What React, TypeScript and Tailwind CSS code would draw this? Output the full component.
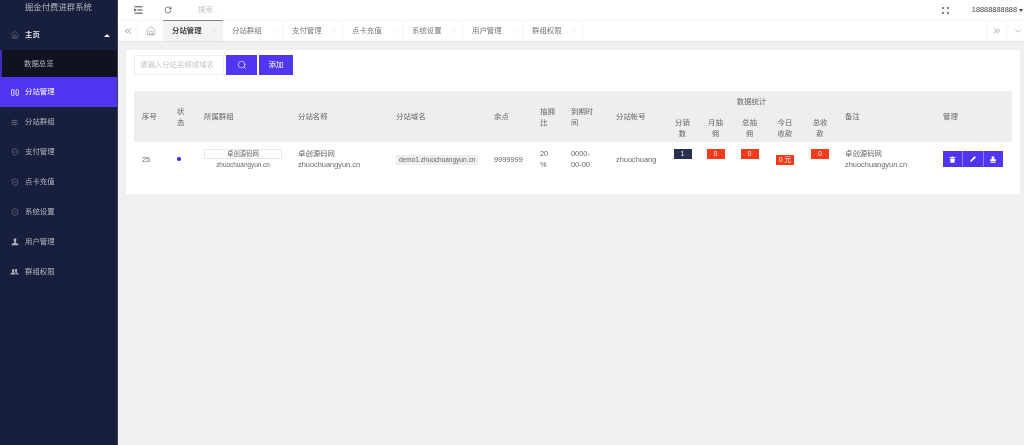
import React from "react";
import { RotateCw, ChevronsLeft, ChevronsRight, ChevronDown, Home, X, Search, ShieldCheck, Pencil, SlidersHorizontal } from "lucide-react";

const font = { fontFamily: '"Liberation Sans","Noto Sans CJK SC",sans-serif' };

function NavRow({ label, icon, active }: { label: string; icon: React.ReactNode; active?: boolean }) {
  return (
    <div className={`h-[30px] flex items-center pl-[10px] gap-[6px] text-[7.4px] ${active ? "bg-[#4f36f0] text-white" : "text-[#b4b7c1]"}`}>
      <span className="w-[9px] flex justify-center">{icon}</span>
      <span>{label}</span>
    </div>
  );
}

function TwoBars() {
  return (
    <svg width="8" height="7" viewBox="0 0 8 7" fill="none" stroke="currentColor" strokeWidth="0.8">
      <rect x="0.5" y="0.5" width="2.4" height="6" rx="0.8" />
      <rect x="5" y="0.5" width="2.4" height="6" rx="0.8" />
    </svg>
  );
}
function PersonIcon() {
  return (
    <svg width="8" height="8" viewBox="0 0 8 8" fill="currentColor">
      <path d="M2.6 1.8a1.4 1.4 0 0 1 2.8 0c0 1-.5 1.7-.7 2.3v.6L7.4 6v1.2H.6V6l2.7-1.3v-.6c-.2-.6-.7-1.3-.7-2.3z" />
    </svg>
  );
}
function PeopleIcon() {
  return (
    <svg width="10" height="8" viewBox="0 0 10 8" fill="currentColor">
      <path d="M2.2 2a1.3 1.3 0 0 1 2.6 0c0 .9-.4 1.5-.6 2v.6l2 1.1v1.1H.6V5.700l2-1.100V4c-.2-.5-.4-1.100-.4-2z" />
      <path d="M6 .8a1.300 1.300 0 0 1 2 1.200c0 .9-.4 1.500-.6 2v.6l2 1v1.200H7.200V5.300L5.400 4.200c.2-.6.4-1.200.4-2 0-.5 0-1 .2-1.400z" />
    </svg>
  );
}
function IndentMenu() {
  return (
    <svg width="9" height="8" viewBox="0 0 9 8" fill="none" stroke="currentColor" strokeWidth="0.9">
      <path d="M0.500 0.800H8.500M3.500 4H8.500M0.500 7.200H8.500" />
      <path d="M0.500 2.700 2.300 4 0.500 5.300z" fill="currentColor" strokeWidth="0.3" />
    </svg>
  );
}
function CornersIcon() {
  return (
    <svg width="7" height="7" viewBox="0 0 7 7" fill="none" stroke="#666" strokeWidth="0.8">
      <path d="M0.500 2.200V0.500H2.200M0.500 0.500 2.300 2.300M6.500 2.200V0.500H4.800M6.500 0.500 4.700 2.300M0.500 4.800V6.500H2.200M0.500 6.500 2.300 4.700M6.500 4.800V6.500H4.800M6.500 6.500 4.700 4.700" />
    </svg>
  );
}
function TrashFilled() {
  return (
    <svg width="7" height="7" viewBox="0 0 7 7" fill="white">
      <path d="M0.500 1.300H2.300L2.700 .5H4.300L4.700 1.300H6.500V2.100H.5zM1.100 2.600H5.900L5.500 6.700H1.500z" />
    </svg>
  );
}
function StampFilled() {
  return (
    <svg width="8" height="7" viewBox="0 0 8 7" fill="white">
      <path d="M2.500 1.500a1.500 1.200 0 0 1 3 0c0 .8-.5 1.200-.6 1.800H7V5H1V3.300h2.100c-.1-.6-.6-1-.6-1.800zM1.500 5.500H6.500V6.700H1.500z" />
    </svg>
  );
}

const tabs = ["分站群组", "支付管理", "点卡充值", "系统设置", "用户管理", "群组权限"];
const th = "font-normal px-[8px] text-left align-middle leading-[11px]";
const subTh = "font-normal px-[8px] text-center align-top leading-[11px] pt-[4px]";

function Badge({ children, dark }: { children: React.ReactNode; dark?: boolean }) {
  return <span className={`inline-block w-[18px] h-[10px] leading-[10px] text-center text-[6.5px] text-white ${dark ? "bg-[#26324d]" : "bg-[#fb3a1c]"}`}>{children}</span>;
}

export default function App() {
  return (
    <div className="flex h-[445px] w-[1024px] overflow-hidden bg-[#f0f0f0] text-[#666] blur-[0.25px]" style={font}>
      <aside className="w-[118px] shrink-0 bg-[#171f3c] border-r border-[#3b4256] flex flex-col">
        <div className="h-[20px] flex items-start pt-[2px] pl-[25px] text-[8.4px] leading-[10px] text-[#b4b7c1]">掘金付费进群系统</div>
        <div className="h-[30px] flex items-center pl-[10px] gap-[6px] text-[7.4px] text-[#e4e5ea]">
          <span className="w-[9px] flex justify-center"><Home size={8} strokeWidth={1} className="text-[#b4b7c1]" /></span>
          <span className="font-bold">主页</span>
          <span className="ml-auto mr-[7px] w-0 h-0 border-x-[3.5px] border-x-transparent border-b-[3.5px] border-b-white" />
        </div>
        <div className="h-[27px] bg-[#10131f] border-l-[2.5px] border-[#3e2dc0] flex items-center pl-[22px] text-[7.4px] text-[#b4b7c1]">数据总览</div>
        <NavRow active label="分站管理" icon={<TwoBars />} />
        <NavRow label="分站群组" icon={<SlidersHorizontal size={7} strokeWidth={1.3} />} />
        <NavRow label="支付管理" icon={<ShieldCheck size={8} strokeWidth={1.1} />} />
        <NavRow label="点卡充值" icon={<ShieldCheck size={8} strokeWidth={1.1} />} />
        <NavRow label="系统设置" icon={<ShieldCheck size={8} strokeWidth={1.1} />} />
        <NavRow label="用户管理" icon={<PersonIcon />} />
        <NavRow label="群组权限" icon={<PeopleIcon />} />
      </aside>

      <main className="flex-1 min-w-0 flex flex-col">
        <header className="h-[20px] bg-white flex items-center text-[#333]">
          <span className="ml-[16px] flex"><IndentMenu /></span>
          <RotateCw size={8} strokeWidth={1.8} className="ml-[21px]" />
          <span className="ml-[26px] text-[7.4px] text-[#c4c4c4]">搜索...</span>
          <span className="ml-auto flex"><CornersIcon /></span>
          <span className="ml-[23px] text-[7.4px] text-[#444]">18888888888</span>
          <span className="ml-[2px] mr-[1px] w-0 h-0 border-x-[2.5px] border-x-transparent border-t-[3px] border-t-[#444]" />
        </header>

        <nav className="h-[22px] bg-white border-y border-b-[#e2e2e2] border-t-[#f6f6f6] flex items-stretch text-[7.4px] text-[#777]">
          <div className="w-[20px] flex items-center justify-center border-r border-[#f2f2f2]"><ChevronsLeft size={10} strokeWidth={1.3} className="text-[#444]" /></div>
          <div className="w-[25px] flex items-center justify-center"><Home size={10} strokeWidth={1} className="text-[#555]" /></div>
          <div className="w-[60px] bg-[#f3f3f3] border-t border-[#7b8191] -mt-px flex items-center pl-[9px] text-[#444] font-bold">
            <span>分站管理</span><X size={5} strokeWidth={1} className="ml-[10px] text-[#bbb]" />
          </div>
          {tabs.map((t) => (
            <div key={t} className="w-[60px] flex items-center pl-[9px] border-r border-[#f4f4f4]">
              <span>{t}</span><X size={5} strokeWidth={1} className="ml-[10px] text-[#bbb]" />
            </div>
          ))}
          <div className="ml-auto w-[21px] flex items-center justify-center border-x border-[#f2f2f2]"><ChevronsRight size={10} strokeWidth={1.3} className="text-[#444]" /></div>
          <div className="w-[17px] flex items-center justify-center pl-[5px]"><ChevronDown size={10} strokeWidth={1} className="text-[#555]" /></div>
        </nav>

        <section className="mt-[8px] ml-[8px] mr-[4px] h-[144px] bg-white px-[8px] pt-[5px]">
          <div className="flex h-[20px] items-stretch text-[7.4px]">
            <div className="w-[90px] border border-[#eeeeee] flex items-center pl-[5px] text-[#c4c4c4]">请输入分站名称或域名</div>
            <button className="ml-[2px] w-[31px] bg-[#4f36f0] flex items-center justify-center text-white"><Search size={10} strokeWidth={1.4} /></button>
            <button className="ml-[2px] w-[34px] bg-[#4f36f0] text-white">添加</button>
          </div>

          <table className="mt-[16px] table-fixed w-[878px] text-[7.4px] border-collapse">
            <colgroup>
              {[35, 27, 94, 98, 98, 46, 31, 45, 58, 33, 33, 35, 36, 34, 98, 77].map((w, i) => <col key={i} style={{ width: w }} />)}
            </colgroup>
            <thead className="bg-[#eeeeee]">
              <tr className="h-[22px]">
                <th rowSpan={2} className={th}>序号</th>
                <th rowSpan={2} className={th}>状态</th>
                <th rowSpan={2} className={th}>所属群组</th>
                <th rowSpan={2} className={th}>分站名称</th>
                <th rowSpan={2} className={th}>分站域名</th>
                <th rowSpan={2} className={th}>余点</th>
                <th rowSpan={2} className={th}>抽拥比</th>
                <th rowSpan={2} className={th}>到期时间</th>
                <th rowSpan={2} className={th}>分站帐号</th>
                <th colSpan={5} className="font-normal text-center align-middle">数据统计</th>
                <th rowSpan={2} className={th}>备注</th>
                <th rowSpan={2} className={th}>管理</th>
              </tr>
              <tr className="h-[29px]">
                <th className={subTh}>分销数</th>
                <th className={subTh}>月抽佣</th>
                <th className={subTh}>总抽佣</th>
                <th className={subTh}>今日收款</th>
                <th className={subTh}>总收款</th>
              </tr>
            </thead>
            <tbody>
              <tr className="h-[34px] leading-[11px]">
                <td className="px-[8px]">25</td>
                <td className="px-[8px]"><span className="block w-[4px] h-[4px] rounded-full bg-[#3d22f5]" /></td>
                <td className="px-[8px] text-center text-[6.4px] leading-[9px]">
                  <div className="h-[10px] border border-[#e8e8e8] leading-[8px]">卓创源码网</div>
                  <div className="mt-[1px]">zhuochuangyun.cn</div>
                </td>
                <td className="px-[8px]">卓创源码网<br />zhuochuangyun.cn</td>
                <td className="px-[8px]"><span className="inline-block bg-[#eeeeee] px-[3px] h-[10px] leading-[10px] text-[6.5px] whitespace-nowrap">demo1.zhuochuangyun.cn</span></td>
                <td className="px-[8px]">9999999</td>
                <td className="px-[8px]">20<br />%</td>
                <td className="px-[8px]">0000-<br />00-00</td>
                <td className="px-[8px]">zhuochuang</td>
                <td className="text-center align-top pt-[6px]"><Badge dark>1</Badge></td>
                <td className="text-center align-top pt-[6px]"><Badge>0</Badge></td>
                <td className="text-center align-top pt-[6px]"><Badge>0</Badge></td>
                <td className="text-center"><span className="inline-block w-[18px] h-[10px] leading-[10px] text-[6.5px] text-white bg-[#fb3a1c] whitespace-nowrap">0 元</span></td>
                <td className="text-center align-top pt-[6px]"><Badge>0</Badge></td>
                <td className="px-[8px]">卓创源码网<br />zhuochuangyun.cn</td>
                <td className="px-[8px]">
                  <div className="flex w-[60px] h-[16px] bg-[#4f36f0] text-white">
                    <span className="flex-1 flex items-center justify-center border-r border-[#8c7cf5]"><TrashFilled /></span>
                    <span className="flex-1 flex items-center justify-center border-r border-[#8c7cf5]"><Pencil size={6} strokeWidth={2} fill="white" /></span>
                    <span className="flex-1 flex items-center justify-center"><StampFilled /></span>
                  </div>
                </td>
              </tr>
            </tbody>
          </table>
        </section>
      </main>
    </div>
  );
}
